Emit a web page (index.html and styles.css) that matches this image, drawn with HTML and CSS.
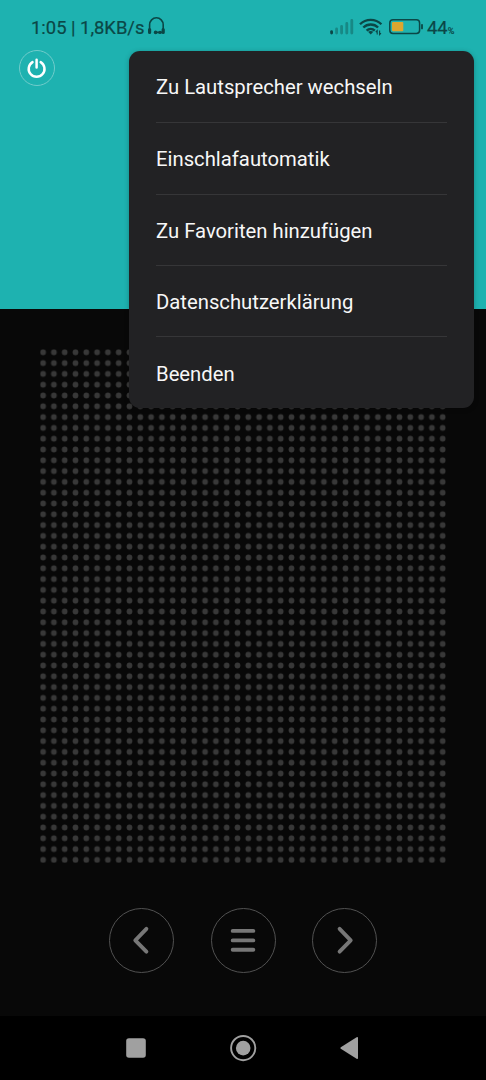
FILE: index.html
```html
<!DOCTYPE html>
<html lang="de">
<head>
<meta charset="utf-8">
<title>Radio</title>
<link rel="stylesheet" href="styles.css">
</head>
<body>
<div class="screen">
  <header class="display">
    <div class="status">
      <span class="status-text">1:05 | 1,8KB/s</span>
      <svg class="headphones" width="20" height="20" viewBox="0 0 20 20">
        <path d="M2.6 14V8.8a6.8 7 0 0 1 13.6 0V14M7.6 16.4h7.6" fill="none" stroke="#0b4746" stroke-width="1.6"/>
        <path d="M2.6 13.6v2.8M16.2 13.6v2.8" stroke="#0b4746" stroke-width="3.2" stroke-linecap="round"/>
        <circle cx="8.6" cy="16.4" r="1.8" fill="#0b4746"/><circle cx="13" cy="16.4" r="1.7" fill="#0b4746"/>
      </svg>
      <svg class="indicators" width="96" height="22" viewBox="0 0 96 22">
        <path d="M1.6 17v-1.4" stroke="#0b4746" stroke-width="2.8" stroke-linecap="round"/>
        <path d="M6.6 17v-4M11.6 17v-6.5M16.8 17v-9.5M21.8 17V4.4" stroke="#178885" stroke-width="2.8" stroke-linecap="round"/>
        <g fill="none" stroke="#0b4746" stroke-width="2.3">
          <path d="M30 8.2a15.3 15.3 0 0 1 21.4 0M33.3 11.5a10.6 10.6 0 0 1 14.8 0M36.6 14.6a6 6 0 0 1 8.2 0"/>
        </g>
        <path d="M40.7 18.6l-2.6-2.8q2.6-1.8 5.2 0z" fill="#0b4746"/>
        <path d="M47.2 18.6v-4l-1.4 1.4M49.6 14.6v4l1.4-1.4" fill="none" stroke="#0b4746" stroke-width="1.1"/>
        <rect x="59.8" y="3.8" width="29.8" height="13.7" rx="3.2" fill="none" stroke="#0b4746" stroke-width="1.5"/>
        <rect x="62" y="6" width="11.3" height="9.3" rx="1" fill="#dba62f"/>
        <path d="M92 8.8v3.6" stroke="#0b4746" stroke-width="1.8" stroke-linecap="round"/>
      </svg>
      <span class="battery">44<small>%</small></span>
    </div>
    <button class="power" aria-label="Ausschalten">
      <svg width="22" height="22" viewBox="0 0 22 22" fill="none" stroke="#fff" stroke-width="2.5" stroke-linecap="round">
        <path d="M10.6 2.8v7.6M6.5 5.1a7.9 7.9 0 1 0 8.2 0"/>
      </svg>
    </button>
  </header>
  <main class="player">
    <svg class="speaker" width="406" height="514" viewBox="0 0 406 514">
      <defs>
        <pattern id="dots" x="-2.3" y="-2.1" width="10.8" height="10.8" patternUnits="userSpaceOnUse">
          <circle cx="5.4" cy="5.4" r="2.85" fill="#383838"/>
        </pattern>
      </defs>
      <rect width="406" height="514" fill="url(#dots)"/>
    </svg>
    <div class="controls">
      <button class="control" aria-label="Zurück"><svg width="63" height="63" viewBox="1 1 63 63"><path d="M37.4 20.9L26.3 32.3l11.1 11.3"/></svg></button>
      <button class="control" aria-label="Liste"><svg width="63" height="63" viewBox="1 1 63 63"><path d="M21.7 22.9h20.6M21.7 32.4h20.6M21.7 41.7h20.6"/></svg></button>
      <button class="control" aria-label="Weiter"><svg width="63" height="63" viewBox="1 1 63 63"><path d="M27.6 20.9l11.1 11.4-11.1 11.3"/></svg></button>
    </div>
  </main>
  <nav class="navbar">
    <svg width="27" height="27" viewBox="0 0 27 27"><rect x="3.2" y="3.2" width="19.6" height="19.6" rx="2.8"/></svg>
    <svg width="27" height="27" viewBox="0 0 27 27"><circle cx="13.2" cy="13.1" r="7.3"/><circle cx="13.2" cy="13.1" r="12.1" fill="none" stroke="#a0a0a0" stroke-width="1.9"/></svg>
    <svg width="27" height="27" viewBox="0 0 27 27"><path d="M3.8 12.3L19.6 2.2q1.4-.7 1.4.8v20q0 1.5-1.4.8L3.8 13.7q-1-.7 0-1.4z"/></svg>
  </nav>
  <ul class="menu">
    <li>Zu Lautsprecher wechseln</li>
    <li>Einschlafautomatik</li>
    <li>Zu Favoriten hinzufügen</li>
    <li>Datenschutzerklärung</li>
    <li>Beenden</li>
  </ul>
</div>
</body>
</html>
```
FILE: styles.css
```css
* { box-sizing: border-box; }
body { margin: 0; background: #000; font-family: Roboto, sans-serif; }
.screen { position: relative; width: 486px; height: 1080px; overflow: hidden; display: flex; flex-direction: column; }
svg { display: block; flex: none; }
button { padding: 0; background: none; display: grid; place-items: center; }

.display { height: 309px; background: #1eb2b0; }
.status { height: 50px; padding: 16px 31px 0 31px; display: flex; align-items: flex-start; color: #0b4746; }
.status-text { font-size: 18.4px; line-height: 24px; -webkit-text-stroke: .2px #0b4746; white-space: nowrap; width: 115px; }
.headphones { margin-left: 1px; }
.indicators { margin-left: auto; margin-right: 1px; }
.battery { font-size: 18.4px; line-height: 23px; -webkit-text-stroke: .2px #0b4746; white-space: nowrap; width: 28px; }
.battery small { font-size: 9px; }
.power { width: 36px; height: 36px; margin-left: 18.5px; border: 1px solid #70cccb; border-radius: 50%; }

.player { height: 707px; background: #080808; }
.speaker { margin: 40px 0 0 40px; }
.controls { display: flex; justify-content: center; gap: 36.5px; margin-top: 45px; }
.control { width: 65px; height: 65px; border: 1px solid #515151; border-radius: 50%; }
.control svg { fill: none; stroke: #777; stroke-width: 3.9; stroke-linecap: round; stroke-linejoin: round; }

.navbar { height: 64px; display: flex; justify-content: center; align-items: center; gap: 80px; fill: #a0a0a0; }

.menu { position: absolute; left: 129px; top: 50.7px; width: 345px; height: 357.2px; margin: 0; padding: 0 27px; list-style: none; background: #222224; border-radius: 11px; box-shadow: 0 1px 5px rgba(0, 0, 0, .25); color: #f7f7f7; font-size: 20.27px; display: grid; grid-template-rows: repeat(5, 1fr); }
.menu li { display: flex; align-items: center; padding-top: 2px; white-space: nowrap; }
.menu li + li { border-top: 1px solid #363638; }
```
